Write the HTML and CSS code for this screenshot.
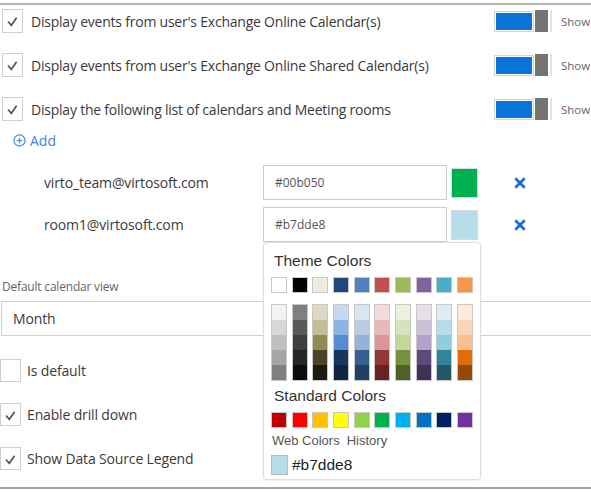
FILE: index.html
```html
<!DOCTYPE html>
<html>
<head>
<meta charset="utf-8">
<link rel="stylesheet" href="styles.css">
</head>
<body>
<div class="page">
  <div class="sources">
    <div class="src-row">
      <span class="cb cb-top"><svg viewBox="0 0 21 23" width="21" height="23"><polyline points="6,12.5 9.3,16.3 14.6,8.8"/></svg></span>
      <span class="src-label">Display events from user's Exchange Online Calendar(s)</span>
      <span class="tg-group"><span class="tg-track"><span class="tg-fill"></span></span><span class="tg-knob"></span><span class="tg-sep"></span><span class="tg-text">Show</span></span>
    </div>
    <div class="src-row">
      <span class="cb cb-top"><svg viewBox="0 0 21 23" width="21" height="23"><polyline points="6,12.5 9.3,16.3 14.6,8.8"/></svg></span>
      <span class="src-label">Display events from user's Exchange Online Shared Calendar(s)</span>
      <span class="tg-group"><span class="tg-track"><span class="tg-fill"></span></span><span class="tg-knob"></span><span class="tg-sep"></span><span class="tg-text">Show</span></span>
    </div>
    <div class="src-row">
      <span class="cb cb-top"><svg viewBox="0 0 21 23" width="21" height="23"><polyline points="6,12.5 9.3,16.3 14.6,8.8"/></svg></span>
      <span class="src-label">Display the following list of calendars and Meeting rooms</span>
      <span class="tg-group"><span class="tg-track"><span class="tg-fill"></span></span><span class="tg-knob"></span><span class="tg-sep"></span><span class="tg-text">Show</span></span>
    </div>
  </div>

  <div class="add-row">
    <svg class="add-icon" viewBox="0 0 13 13" width="13" height="13"><circle cx="6.5" cy="6.5" r="5.6"/><line x1="6.5" y1="3.6" x2="6.5" y2="9.4"/><line x1="3.6" y1="6.5" x2="9.4" y2="6.5"/></svg>
    <span class="add-text">Add</span>
  </div>

  <div class="cal-list">
    <div class="cal-row">
      <span class="cal-name">virto_team@virtosoft.com</span>
      <span class="cal-input">#00b050</span>
      <span class="cal-swatch" style="background:#00b050"></span>
      <svg class="cal-del" viewBox="0 0 12 12" width="12" height="12"><line x1="1.3" y1="1.3" x2="10.7" y2="10.7"/><line x1="10.7" y1="1.3" x2="1.3" y2="10.7"/></svg>
    </div>
    <div class="cal-row">
      <span class="cal-name">room1@virtosoft.com</span>
      <span class="cal-input">#b7dde8</span>
      <span class="cal-swatch" style="background:#b7dde8"></span>
      <svg class="cal-del" viewBox="0 0 12 12" width="12" height="12"><line x1="1.3" y1="1.3" x2="10.7" y2="10.7"/><line x1="10.7" y1="1.3" x2="1.3" y2="10.7"/></svg>
    </div>
  </div>

  <div class="view-label">Default calendar view</div>
  <div class="view-select">Month</div>

  <div class="opts">
    <div class="opt-row">
      <span class="cb cb-bottom"></span>
      <span class="opt-label">Is default</span>
    </div>
    <div class="opt-row">
      <span class="cb cb-bottom"><svg viewBox="0 0 21 23" width="21" height="23"><polyline points="6,12.5 9.3,16.3 14.6,8.8"/></svg></span>
      <span class="opt-label">Enable drill down</span>
    </div>
    <div class="opt-row">
      <span class="cb cb-bottom"><svg viewBox="0 0 21 23" width="21" height="23"><polyline points="6,12.5 9.3,16.3 14.6,8.8"/></svg></span>
      <span class="opt-label">Show Data Source Legend</span>
    </div>
  </div>
</div>

<div class="picker">
  <div class="pk-title">Theme Colors</div>
  <div class="pk-row pk-theme">
    <span class="pk-sw" style="background:#ffffff"></span>
    <span class="pk-sw" style="background:#000000"></span>
    <span class="pk-sw" style="background:#eeece1"></span>
    <span class="pk-sw" style="background:#1f497d"></span>
    <span class="pk-sw" style="background:#4f81bd"></span>
    <span class="pk-sw" style="background:#c0504d"></span>
    <span class="pk-sw" style="background:#9bbb59"></span>
    <span class="pk-sw" style="background:#8064a2"></span>
    <span class="pk-sw" style="background:#4bacc6"></span>
    <span class="pk-sw" style="background:#f79646"></span>
  </div>
  <div class="pk-row pk-shades">
    <span class="pk-col"><i style="background:#f2f2f2"></i><i style="background:#d8d8d8"></i><i style="background:#bfbfbf"></i><i style="background:#a5a5a5"></i><i style="background:#7f7f7f"></i></span>
    <span class="pk-col"><i style="background:#7f7f7f"></i><i style="background:#595959"></i><i style="background:#3f3f3f"></i><i style="background:#262626"></i><i style="background:#0c0c0c"></i></span>
    <span class="pk-col"><i style="background:#ddd9c3"></i><i style="background:#c4bd97"></i><i style="background:#938953"></i><i style="background:#494429"></i><i style="background:#1d1b10"></i></span>
    <span class="pk-col"><i style="background:#c6d9f0"></i><i style="background:#8db3e2"></i><i style="background:#548dd4"></i><i style="background:#17365d"></i><i style="background:#0f243e"></i></span>
    <span class="pk-col"><i style="background:#dbe5f1"></i><i style="background:#b8cce4"></i><i style="background:#95b3d7"></i><i style="background:#366092"></i><i style="background:#244061"></i></span>
    <span class="pk-col"><i style="background:#f2dcdb"></i><i style="background:#e5b9b7"></i><i style="background:#d99694"></i><i style="background:#953734"></i><i style="background:#632423"></i></span>
    <span class="pk-col"><i style="background:#ebf1dd"></i><i style="background:#d7e3bc"></i><i style="background:#c3d69b"></i><i style="background:#76923c"></i><i style="background:#4f6128"></i></span>
    <span class="pk-col"><i style="background:#e5e0ec"></i><i style="background:#ccc1d9"></i><i style="background:#b2a2c7"></i><i style="background:#5f497a"></i><i style="background:#3f3151"></i></span>
    <span class="pk-col"><i style="background:#dbeef3"></i><i style="background:#b7dde8"></i><i style="background:#92cddc"></i><i style="background:#31859b"></i><i style="background:#205867"></i></span>
    <span class="pk-col"><i style="background:#fdeada"></i><i style="background:#fbd5b5"></i><i style="background:#fac08f"></i><i style="background:#e36c09"></i><i style="background:#974806"></i></span>
  </div>
  <div class="pk-title pk-title2">Standard Colors</div>
  <div class="pk-row pk-standard">
    <span class="pk-sw" style="background:#c00000"></span>
    <span class="pk-sw" style="background:#ff0000"></span>
    <span class="pk-sw" style="background:#ffc000"></span>
    <span class="pk-sw" style="background:#ffff00"></span>
    <span class="pk-sw" style="background:#92d050"></span>
    <span class="pk-sw" style="background:#00b050"></span>
    <span class="pk-sw" style="background:#00b0f0"></span>
    <span class="pk-sw" style="background:#0070c0"></span>
    <span class="pk-sw" style="background:#002060"></span>
    <span class="pk-sw" style="background:#7030a0"></span>
  </div>
  <div class="pk-tabs"><span>Web Colors</span><span>History</span></div>
  <div class="pk-current">
    <span class="pk-cur-sw" style="background:#b7dde8"></span>
    <span class="pk-cur-text">#b7dde8</span>
  </div>
</div>
</body>
</html>
```

FILE: styles.css
```css
html, body {
  margin: 0;
  padding: 0;
  background: #fff;
}
body {
  width: 591px;
  height: 493px;
  overflow: hidden;
  position: relative;
  font-family: "Open Sans", "Noto Sans", sans-serif;
  color: #3a3a3a;
}
.page {
  margin-top: 3px;
  border-top: 2px solid #b5b5b5;
  border-bottom: 2px solid #a5a5a5;
  padding-bottom: 17px;
}

/* checkbox */
.cb {
  display: block;
  box-sizing: border-box;
  width: 21px;
  height: 23px;
  border: 1px solid #cfcfcf;
  background: #fff;
  flex: 0 0 auto;
  position: relative;
}
.cb svg {
  display: block;
  margin: -1px;
}
.cb polyline {
  fill: none;
  stroke: #555;
  stroke-width: 1.7;
  stroke-linejoin: miter;
}

/* source rows */
.sources {
  padding-top: 4px;
  display: flex;
  flex-direction: column;
  gap: 20px;
}
.src-row {
  display: flex;
  align-items: center;
  height: 24px;
  padding-left: 2px;
}
.cb-top {
  height: 24px;
}
.src-label {
  flex: 1 1 auto;
  margin-left: 8px;
  font-size: 14px;
  letter-spacing: -0.22px;
  white-space: nowrap;
}
.tg-group {
  flex: 0 0 97px;
  display: flex;
  align-items: center;
}
.tg-track {
  box-sizing: border-box;
  width: 40px;
  height: 21px;
  border: 1px solid #d2d2d2;
  padding: 1px;
  display: block;
}
.tg-fill {
  display: block;
  width: 100%;
  height: 100%;
  background: #0a74d6;
}
.tg-knob {
  display: block;
  width: 13px;
  height: 22px;
  margin-left: 1px;
  background: #737373;
}
.tg-sep {
  display: block;
  width: 2px;
  height: 22px;
  margin-left: 2px;
  background: #e3e3e3;
}
.tg-text {
  margin-left: 9px;
  font-size: 11.5px;
  color: #666;
  white-space: nowrap;
}

/* add */
.add-row {
  margin-top: 10px;
  height: 18px;
  display: flex;
  align-items: center;
  padding-left: 13px;
}
.add-icon circle {
  fill: none;
  stroke: #3b86d8;
  stroke-width: 1.1;
}
.add-icon line {
  stroke: #3b86d8;
  stroke-width: 1.1;
}
.add-text {
  margin-left: 4px;
  font-size: 14px;
  color: #3b86d8;
}

/* calendar list */
.cal-list {
  margin-top: 16px;
  display: flex;
  flex-direction: column;
  gap: 7px;
}
.cal-row {
  display: flex;
  align-items: center;
  height: 35px;
}
.cal-name {
  box-sizing: border-box;
  width: 263px;
  padding-left: 44px;
  font-size: 14px;
  letter-spacing: -0.15px;
  white-space: nowrap;
}
.cal-input {
  box-sizing: border-box;
  width: 184px;
  height: 35px;
  border: 1px solid #cdcdcd;
  padding-left: 11px;
  display: flex;
  align-items: center;
  font-size: 12px;
  color: #555;
}
.cal-swatch {
  box-sizing: border-box;
  width: 27px;
  height: 30px;
  margin-left: 4px;
  border: 1px solid #dadada;
}
.cal-del {
  margin-left: 36px;
}
.cal-del line {
  stroke: #1470d0;
  stroke-width: 2.8;
}

/* default view */
.view-label {
  margin-top: 37px;
  padding-left: 2px;
  font-size: 12px;
  line-height: 16px;
  letter-spacing: -0.2px;
  color: #666;
}
.view-select {
  box-sizing: border-box;
  margin-top: 6px;
  margin-left: 1px;
  margin-right: -20px;
  height: 35px;
  border: 1px solid #d0d0d0;
  padding-left: 11px;
  display: flex;
  align-items: center;
  font-size: 14px;
  letter-spacing: -0.15px;
}

/* options */
.opts {
  margin-top: 23px;
  display: flex;
  flex-direction: column;
  gap: 21px;
}
.opt-row {
  display: flex;
  align-items: center;
  height: 23px;
}
.opt-label {
  margin-left: 6px;
  font-size: 14px;
  letter-spacing: -0.15px;
  white-space: nowrap;
}

/* color picker popup */
.picker {
  position: absolute;
  left: 263px;
  top: 242px;
  box-sizing: border-box;
  width: 218px;
  height: 238px;
  background: #fff;
  border: 1px solid #dedede;
  border-radius: 4px;
  box-shadow: 0 1px 3px rgba(0,0,0,0.08);
  padding: 9px 7px 0 7px;
  font-family: "Liberation Sans", Arial, sans-serif;
}
.pk-title {
  padding-left: 3px;
  font-size: 15.5px;
  line-height: 18px;
  color: #333;
}
.pk-row {
  display: flex;
  justify-content: space-between;
}
.pk-theme {
  margin-top: 7px;
}
.pk-sw {
  display: block;
  box-sizing: border-box;
  width: 16px;
  height: 16px;
  border: 1px solid #c8c8c8;
}
.pk-shades {
  margin-top: 11px;
}
.pk-col {
  display: flex;
  flex-direction: column;
  box-sizing: border-box;
  width: 16px;
  border: 1px solid #c8c8c8;
}
.pk-col i {
  display: block;
  height: 15px;
}
.pk-title2 {
  margin-top: 6px;
}
.pk-standard {
  margin-top: 7px;
}
.pk-tabs {
  margin-top: 5px;
  display: flex;
  gap: 7px;
  padding-left: 1px;
  font-size: 13px;
  line-height: 16px;
  color: #555;
}
.pk-current {
  margin-top: 6px;
  display: flex;
  align-items: center;
}
.pk-cur-sw {
  display: block;
  box-sizing: border-box;
  width: 17px;
  height: 20px;
  border: 1px solid #bbb;
}
.pk-cur-text {
  margin-left: 4px;
  font-size: 15.5px;
  color: #222;
}
```
